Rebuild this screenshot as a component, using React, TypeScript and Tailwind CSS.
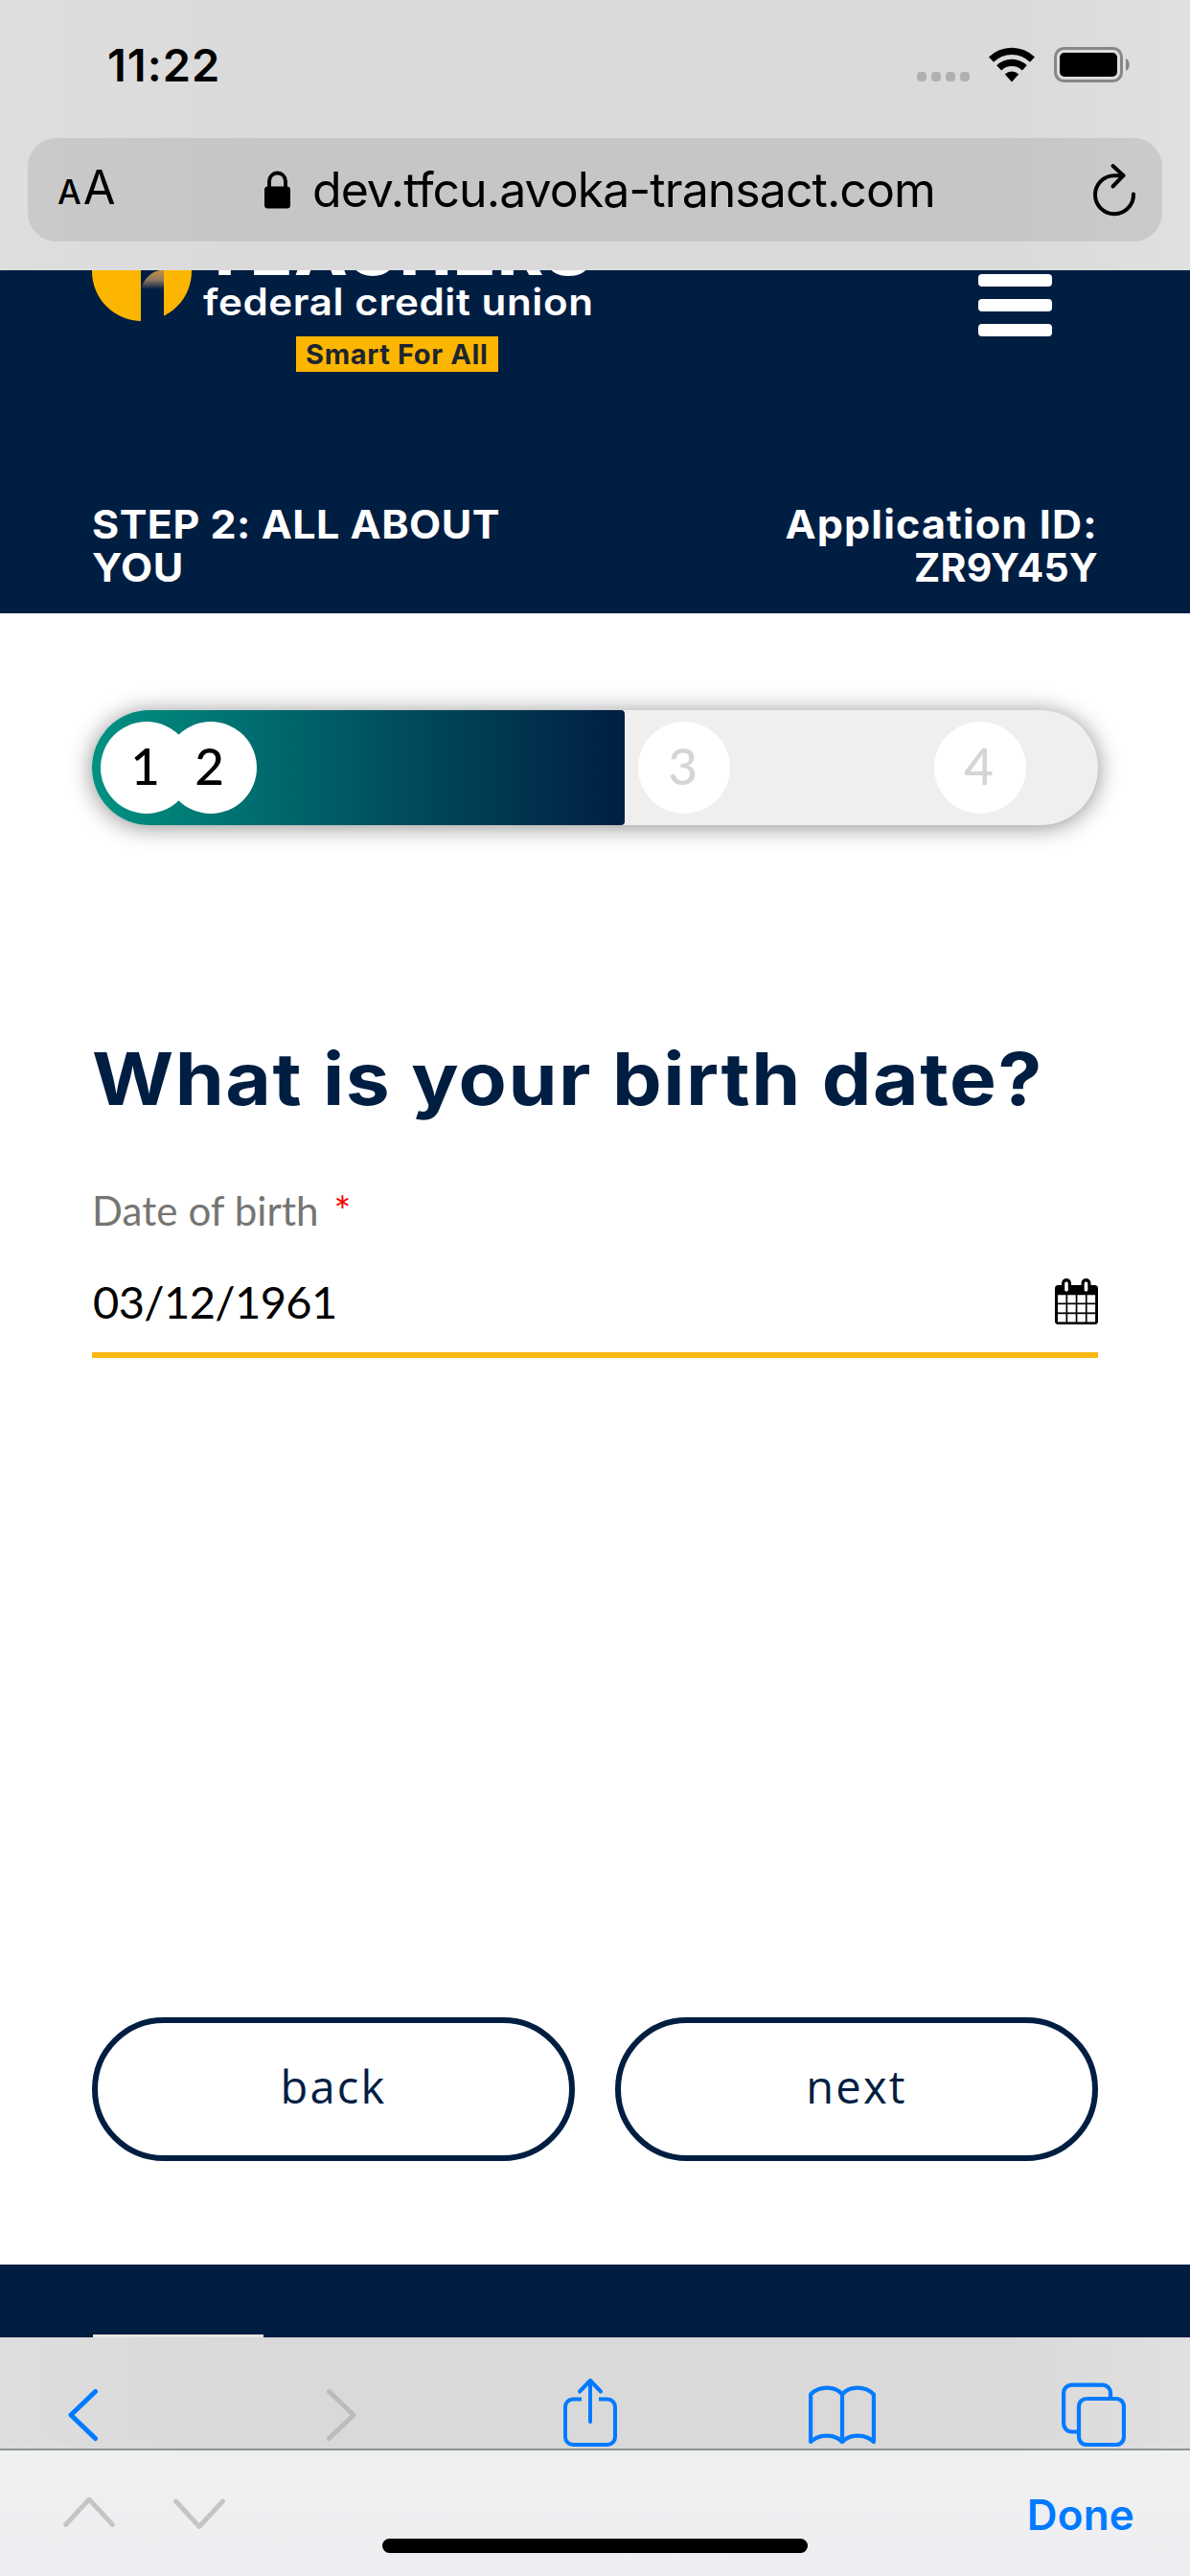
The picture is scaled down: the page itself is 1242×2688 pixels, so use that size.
import type { ReactNode } from "react";

function WifiIcon() {
  return (
    <svg width="48" height="37" viewBox="0 0 48 37" className="block">
      <path d="M0 10.500a34.500 34.500 0 0 1 48 0l-5 5.200a27 27 0 0 0-38 0z" />
      <path d="M8.200 19.300a22.600 22.600 0 0 1 31.600 0l-5 5.200a15.400 15.400 0 0 0-21.600 0z" />
      <path d="M16.800 28.400a10.500 10.500 0 0 1 14.400 0L24 36.500z" />
    </svg>
  );
}

function BatteryIcon() {
  return (
    <svg width="80" height="38" viewBox="0 0 80 38" className="block">
      <rect x="1.5" y="1.5" width="69" height="34" rx="9" fill="none" stroke="#868686" strokeWidth="3" />
      <rect x="6" y="6" width="60" height="25" rx="5" />
      <path d="M75 12c5 2 5 11 0 13z" fill="#868686" />
    </svg>
  );
}

function StatusBar() {
  return (
    <div className="flex h-[144px] items-start">
      <div className="ml-[112px] text-[47px] leading-[136px] font-semibold tracking-[1px]">11:22</div>
      <div className="mt-[75px] ml-auto flex gap-[5px]">
        <span className="size-[10px] rounded-[4px] bg-[#b0b0b0]" />
        <span className="size-[10px] rounded-[4px] bg-[#b0b0b0]" />
        <span className="size-[10px] rounded-[4px] bg-[#b0b0b0]" />
        <span className="size-[10px] rounded-[4px] bg-[#b0b0b0]" />
      </div>
      <div className="mt-[49px] ml-[20px]">
        <WifiIcon />
      </div>
      <div className="mt-[49px] mr-[62px] ml-[20px]">
        <BatteryIcon />
      </div>
    </div>
  );
}

function AddressBar() {
  return (
    <div className="mx-[29px] flex h-[108px] items-center rounded-[30px] bg-black/[0.09]">
      <div className="ml-[31px] flex w-[216px] items-baseline leading-[108px]">
        <span className="text-[35px] font-medium">A</span>
        <span className="ml-[2px] text-[49px]">A</span>
      </div>
      <svg width="27" height="40" viewBox="0 0 27 40" className="block">
        <path d="M5 18V11a8.500 8.500 0 0 1 17 0v7" fill="none" stroke="#000" strokeWidth="3.8" />
        <rect x="0" y="16.5" width="27" height="23" rx="3.5" />
      </svg>
      <div className="ml-[23px] text-[50px] leading-[108px] tracking-[-0.96px] whitespace-nowrap">
        dev.tfcu.avoka-transact.com
      </div>
      <svg
        width="46"
        height="56"
        viewBox="0 0 46 56"
        className="mr-[27px] ml-auto block"
        fill="none"
        stroke="#000"
        strokeWidth="4"
        strokeLinecap="round"
        strokeLinejoin="round"
      >
        <path d="M43 32.500A20 20 0 1 1 23 13.200h9.500" />
        <path d="M21.500 3 32.500 13.200 21.500 24.500" />
      </svg>
    </div>
  );
}

function Logo() {
  return (
    <div className="flex">
      <svg width="104" height="56" viewBox="0 0 104 56" className="block">
        <defs>
          <linearGradient id="pillar" x1="0" y1="0" x2="0" y2="1">
            <stop offset="0" stopColor="#c39142" />
            <stop offset="0.2" stopColor="#8d7760" />
            <stop offset="0.4" stopColor="#001e42" />
          </linearGradient>
        </defs>
        <circle cx="52" cy="1" r="52" fill="#fdb600" />
        <rect x="51" y="0" width="24" height="56" fill="#001e42" />
        <path d="M52 17C55 8 63 1 71 0h4v50H52z" fill="url(#pillar)" />
      </svg>
      <div className="ml-[10px] w-[420px] text-white">
        <div className="-mt-[49px] origin-left scale-x-110 text-[66px] leading-[60px] font-extrabold tracking-[1.6px]">
          TEACHERS
        </div>
        <div className="mt-[2px] ml-[2px] origin-left scale-x-108 text-[39px] leading-[40px] font-semibold tracking-[0.55px] whitespace-nowrap">
          federal credit union
        </div>
        <div className="mt-[16px] ml-[99px] h-[37px] w-[211px] bg-[#fdb600] pl-[10px] text-[29px] leading-[37px] font-bold tracking-[0.64px] whitespace-nowrap text-[#1c2530]">
          Smart For All
        </div>
      </div>
    </div>
  );
}

function PageHeader() {
  return (
    <header className="flex h-[358px] flex-col overflow-hidden bg-[#001e42] pr-[96px] pl-[96px] text-white">
      <div className="flex h-[243px] items-start justify-between">
        <Logo />
        <div className="mt-[4px] mr-[48px] flex flex-col gap-[13px]">
          <span className="h-[13px] w-[77px] rounded-[4px] bg-white" />
          <span className="h-[13px] w-[77px] rounded-[4px] bg-white" />
          <span className="h-[13px] w-[77px] rounded-[4px] bg-white" />
        </div>
      </div>
      <div className="flex justify-between text-[41px] leading-[45px] font-bold">
        <div className="w-[460px] origin-left scale-x-105 tracking-[0.45px]">STEP 2: ALL ABOUT YOU</div>
        <div className="flex flex-col items-end whitespace-nowrap">
          <span className="origin-right scale-x-105 tracking-[1.1px]">Application ID:</span>
          <span className="tracking-[0.2px]">ZR9Y45Y</span>
        </div>
      </div>
    </header>
  );
}

function StepDot({ active, children }: { active?: boolean; children: ReactNode }) {
  return (
    <div
      className={
        "h-[96px] w-[96px] shrink-0 rounded-full bg-white pr-[3px] text-center font-[Lato,sans-serif] text-[53px] leading-[92px] font-medium " +
        (active ? "text-black" : "text-[#d5d5d5]")
      }
    >
      {children}
    </div>
  );
}

function Progress() {
  return (
    <div className="flex h-[120px] overflow-hidden rounded-full bg-[#efefef] shadow-[0_2px_24px_rgba(0,0,0,0.45)]">
      <div className="flex w-[556px] items-center rounded-r-[4px] bg-linear-to-r from-[#009282] to-[#001e42] pl-[9px]">
        <StepDot active>1</StepDot>
        <div className="-ml-[29px]">
          <StepDot active>2</StepDot>
        </div>
      </div>
      <div className="flex items-center gap-[213px] pl-[14px]">
        <StepDot>3</StepDot>
        <StepDot>4</StepDot>
      </div>
    </div>
  );
}

function CalendarIcon() {
  return (
    <svg width="45" height="49" viewBox="0 0 45 49" className="block">
      <rect x="0" y="7" width="45" height="41" rx="3.5" />
      <rect x="7" y="0" width="10" height="16" rx="5" />
      <rect x="27.5" y="0" width="10" height="16" rx="5" />
      <rect x="10.2" y="3.5" width="3.6" height="10" rx="1.5" fill="#fff" />
      <rect x="30.7" y="3.5" width="3.6" height="10" rx="1.5" fill="#fff" />
      <g fill="#fff">
        {[17.3, 27.2, 37.2].map((y) =>
          [3, 13.2, 23.4, 33.6].map((x) => <rect key={`${x}-${y}`} x={x} y={y} width="8.5" height="8.2" />),
        )}
      </g>
    </svg>
  );
}

function PillButton({ children }: { children: ReactNode }) {
  return (
    <button className="h-[150px] w-[504px] rounded-full border-[6px] border-[#001e42] pb-[5px] font-['Open_Sans',sans-serif] text-[47px] font-medium tracking-[2.2px] text-[#001e42]">
      {children}
    </button>
  );
}

function FormPage() {
  return (
    <main className="h-[1723px] bg-white px-[96px] pt-[101px]">
      <Progress />
      <h1 className="mt-[219px] origin-left scale-x-108 text-[76px] leading-[90px] font-bold tracking-[1.4px] whitespace-nowrap text-[#001e42]">
        What is your birth date?
      </h1>
      <div className="mt-[63px] font-[Lato,sans-serif] text-[42px] leading-[60px] tracking-[0.1px] text-[#757571]">
        <span>Date of birth</span>
        <span className="ml-[16px] text-[#f50000]">*</span>
      </div>
      <div className="flex h-[124px] items-start justify-between border-b-[6px] border-[#fcb614] pt-[35px]">
        <span className="ml-[1px] font-[Lato,sans-serif] text-[47px] leading-[60px] tracking-[-0.59px] text-black">
          03/12/1961
        </span>
        <div className="mt-[6px]">
          <CalendarIcon />
        </div>
      </div>
      <div className="mt-[688px] flex justify-between">
        <PillButton>back</PillButton>
        <PillButton>next</PillButton>
      </div>
    </main>
  );
}

function SafariToolbar() {
  return (
    <div className="flex h-[118px] items-start border-b-2 border-[#909493] bg-[linear-gradient(90deg,#dedede_0%,#d9d9d9_18%,#d9d9d9_84%,#e0e0e0_100%)]">
      <div className="flex items-start [&>svg]:block [&>svg]:shrink-0">
        <svg width="32" height="55" viewBox="0 0 32 55" className="mt-[54px] ml-[70px]" fill="none" stroke="#007aff" strokeWidth="5" strokeLinecap="round" strokeLinejoin="round">
          <path d="M29.500 2.500 4 27l25.500 24.500" />
        </svg>
        <svg width="32" height="55" viewBox="0 0 32 55" className="mt-[54px] ml-[239px]" fill="none" stroke="#bbbbbb" strokeWidth="5" strokeLinecap="round" strokeLinejoin="round">
          <path d="M2.500 2.500 28 27 2.500 51.500" />
        </svg>
        <svg width="56" height="72" viewBox="0 0 56 72" className="mt-[42px] ml-[215px]" fill="none" stroke="#007aff" strokeWidth="4" strokeLinecap="round" strokeLinejoin="round">
          <path strokeLinecap="butt" d="M19 22.500H10a8 8 0 0 0-8 8v31.500a8 8 0 0 0 8 8h36a8 8 0 0 0 8-8V30.500a8 8 0 0 0-8-8h-9" />
          <path d="M28 3v43M17 14.500 28 3l11 11.500" />
        </svg>
        <svg width="70" height="62" viewBox="0 0 70 62" className="mt-[50px] ml-[200px]" fill="none" stroke="#007aff" strokeWidth="4.2" strokeLinecap="round" strokeLinejoin="round">
          <path d="M35 9.500C28 0.500 11 0 2.100 9.500V59C11 50.500 27 50.500 35 59 43 50.500 59 50.500 67.900 59V9.500C59 0 42 0.500 35 9.500z" />
          <path d="M35 9.500V59" />
        </svg>
        <svg width="67" height="67" viewBox="0 0 67 67" className="mt-[47px] ml-[194px]" fill="none" stroke="#007aff" strokeWidth="4.2">
          <path d="M16 51.500h-5.500a8.400 8.400 0 0 1-8.400-8.400V11a8.400 8.400 0 0 1 8.400-8.400h32.100a8.400 8.400 0 0 1 8.400 8.400v5.500" />
          <rect x="18" y="17" width="47" height="48" rx="8" />
        </svg>
      </div>
    </div>
  );
}

function KeyboardBar() {
  return (
    <div className="relative flex h-[131px] items-start bg-linear-to-b from-[#eef0f0] to-[#efeef2]">
      <svg width="56" height="34" viewBox="0 0 56 34" className="mt-[47px] ml-[65px] block" fill="none" stroke="#c5c5c7" strokeWidth="4.8" strokeLinecap="round" strokeLinejoin="round">
        <path d="M3.500 30.500 28 4l24.500 26.500" />
      </svg>
      <svg width="56" height="34" viewBox="0 0 56 34" className="mt-[49px] ml-[59px] block" fill="none" stroke="#c5c5c7" strokeWidth="4.8" strokeLinecap="round" strokeLinejoin="round">
        <path d="M3.500 4 28 30.500 52.500 4" />
      </svg>
      <div className="mr-[58px] ml-auto h-[131px] text-[44px] leading-[134px] font-semibold tracking-[0.17px] text-[#007aff]">
        Done
      </div>
      <div className="absolute top-[92px] left-[399px] h-[15px] w-[444px] rounded-full bg-black" />
    </div>
  );
}

export default function App() {
  return (
    <div className="flex h-[2688px] w-[1242px] flex-col overflow-hidden bg-white font-[Inter,sans-serif] text-black">
      <div className="h-[282px] shrink-0 bg-[linear-gradient(90deg,#dedede_0%,#dadada_22%,#dadada_84%,#e0e0e0_100%)]">
        <StatusBar />
        <AddressBar />
      </div>
      <PageHeader />
      <FormPage />
      <footer className="flex h-[76px] shrink-0 items-end bg-[#001e42] pl-[97px]">
        <div className="h-[3px] w-[178px] bg-[#e8e6e0]" />
      </footer>
      <SafariToolbar />
      <KeyboardBar />
    </div>
  );
}
